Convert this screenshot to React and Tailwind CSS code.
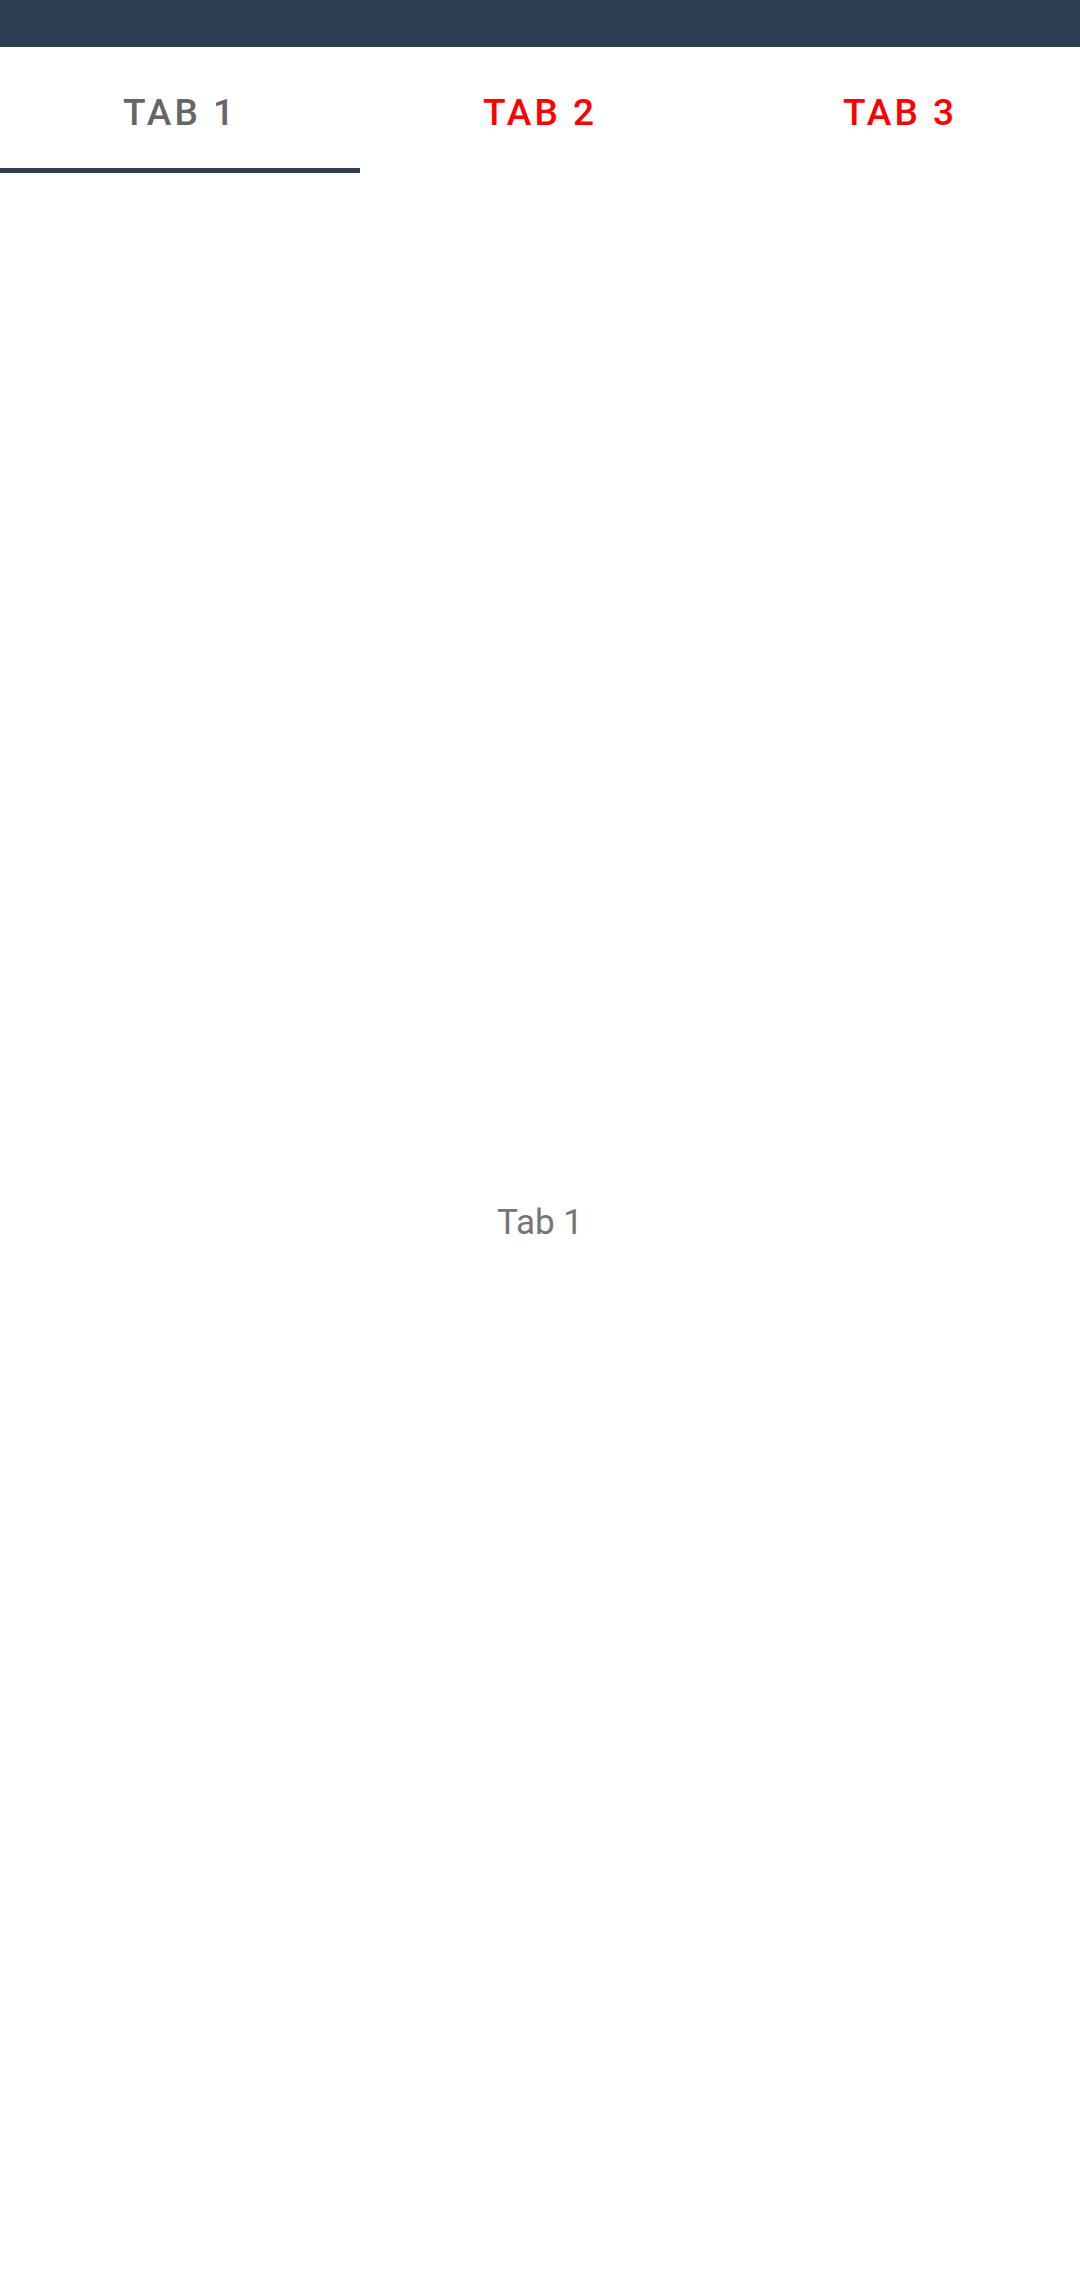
import { useState } from "react";

const tabs = ["TAB 1", "TAB 2", "TAB 3"];

export default function App() {
  const [active, setActive] = useState(0);

  return (
    <div
      className="flex flex-col w-full h-[2289px] bg-white"
      style={{ fontFamily: "Roboto, 'Noto Sans', sans-serif" }}
    >
      {/* status / app bar */}
      <div className="h-[47px] bg-[#2e3e50]" />

      {/* tab strip */}
      <div className="flex h-[126px]">
        {tabs.map((label, i) => (
          <button
            key={label}
            onClick={() => setActive(i)}
            className={
              "flex-1 flex flex-col items-center " +
              (i === active ? "text-[#666666]" : "text-[#ff0000]")
            }
          >
            <div className="flex-1 flex items-center pt-[10px]">
              <span className="text-[37px] leading-none font-medium tracking-[3px]">
                {label}
              </span>
            </div>
            <div
              className={
                "w-full h-[5px] " +
                (i === active ? "bg-[#2e3e50]" : "bg-transparent")
              }
            />
          </button>
        ))}
      </div>

      {/* content */}
      <div className="flex-1 flex items-center justify-center pb-[18px]">
        <span className="text-[35px] leading-none text-[#757575]">
          {tabs[active].charAt(0) + tabs[active].slice(1).toLowerCase()}
        </span>
      </div>
    </div>
  );
}
